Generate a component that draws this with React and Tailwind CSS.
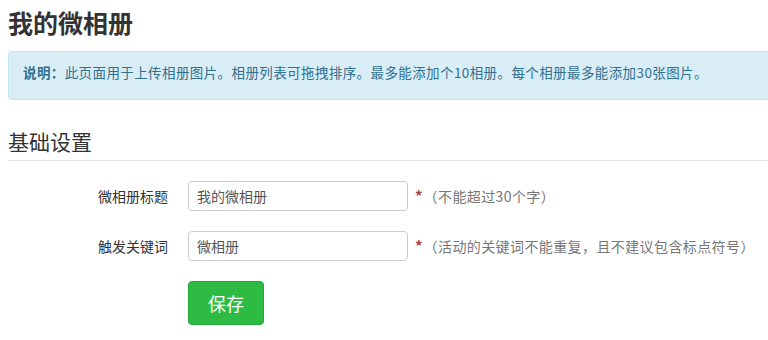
export default function App() {
  const rows = [
    { label: '微相册标题', value: '我的微相册', hint: '（不能超过30个字）' },
    { label: '触发关键词', value: '微相册', hint: '（活动的关键词不能重复，且不建议包含标点符号）' },
  ]

  return (
    <div className="w-[768px] h-[340px] overflow-hidden bg-white pl-2 font-['Microsoft_YaHei','Noto_Sans_CJK_SC',sans-serif] text-[#333]">
      <h1 className="pt-[7px] text-[25px] leading-[30px] font-bold text-[#333]">我的微相册</h1>

      <div className="mt-[14px] h-[49px] w-[780px] rounded border border-[#bce8f1] bg-[#d9edf7] pl-[14px] pt-[10px] text-[13.5px] leading-[20px] tracking-[0.4px] text-[#31708f]">
        <span className="font-bold">说明：</span>此页面用于上传相册图片。相册列表可拖拽排序。最多能添加个10相册。每个相册最多能添加30张图片。
      </div>

      <h2 className="mt-[26px] border-b border-[#e5e5e5] pb-[4px] text-[21px] leading-[30px] font-normal text-[#333]">基础设置</h2>

      <div className="mt-[20px] flex flex-col gap-[20px]">
        {rows.map(r => (
          <div key={r.label} className="flex items-center">
            <label className="w-[160px] text-right text-[14px] text-[#333]">{r.label}</label>
            <input
              readOnly
              value={r.value}
              className="ml-[20px] h-[30px] w-[220px] rounded border border-[#ccc] px-2 text-[14px] text-[#555] outline-none"
            />
            <span className="ml-[7px] text-[15px] font-bold text-[#a94442]">*</span>
            <span className="ml-[1px] text-[14px] tracking-[0.4px] text-[#777]">{r.hint}</span>
          </div>
        ))}
        <div className="flex">
          <button className="ml-[180px] h-[44px] w-[76px] rounded border border-[#25a63a] bg-[#2dbb43] text-[18px] text-white">
            保存
          </button>
        </div>
      </div>
    </div>
  )
}
